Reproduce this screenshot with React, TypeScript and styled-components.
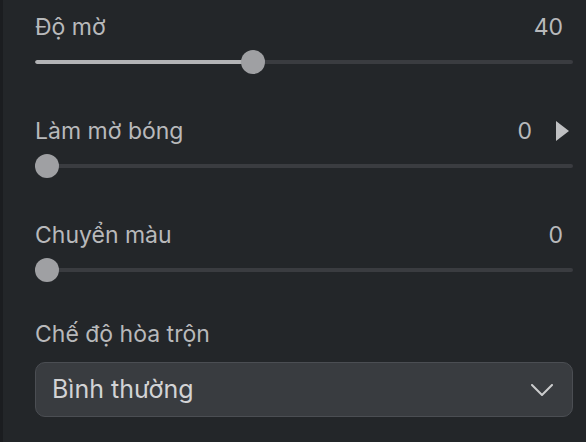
import React from "react";
import styled, { createGlobalStyle } from "styled-components";

const GlobalStyle = createGlobalStyle`
  html, body {
    margin: 0;
    padding: 0;
    background: #232629;
  }
  body {
    font-family: Inter, "Noto Sans", sans-serif;
  }
`;

interface SliderRowProps {
  label: string;
  value: number;
  max?: number;
  expandable?: boolean;
}

const SliderRow: React.FC<SliderRowProps> = ({
  label,
  value,
  max = 100,
  expandable,
}) => {
  const pct = Math.max(0, Math.min(1, value / max));

  return (
    <Section>
      <Header $withArrow={expandable}>
        <Label>{label}</Label>
        <Right>
          <Value>{value}</Value>
          {expandable && <Arrow />}
        </Right>
      </Header>
      <SliderBox>
        <Track>
          <Fill style={{ width: `calc(12px + ${pct} * (100% - 24px))` }} />
        </Track>
        <Thumb style={{ left: `calc(${pct} * (100% - 24px))` }} />
      </SliderBox>
    </Section>
  );
};

const App: React.FC = () => {
  return (
    <>
      <GlobalStyle />
      <Panel>
        <SliderRow label="Độ mờ" value={40} />
        <SliderRow label="Làm mờ bóng" value={0} expandable />
        <SliderRow label="Chuyển màu" value={0} />
        <BlendBlock>
          <Label>Chế độ hòa trộn</Label>
          <Select>
            <span>Bình thường</span>
            <Chevron viewBox="0 0 22 12" aria-hidden>
              <path
                d="M1 1 L11 11 L21 1"
                fill="none"
                stroke="currentColor"
                strokeWidth="2"
                strokeLinecap="round"
                strokeLinejoin="round"
              />
            </Chevron>
          </Select>
        </BlendBlock>
      </Panel>
    </>
  );
};

const Panel = styled.div`
  box-sizing: border-box;
  width: 586px;
  height: 442px;
  border-left: 3px solid #1b1d20;
  background: #232629;
  padding: 14px 13px 0 32px;
  display: flex;
  flex-direction: column;
  gap: 44px;
  overflow: hidden;
`;

const Section = styled.div`
  display: flex;
  flex-direction: column;
  gap: 10px;
`;

const Header = styled.div<{ $withArrow?: boolean }>`
  display: flex;
  justify-content: space-between;
  align-items: center;
  height: 26px;
  padding-right: ${(p) => (p.$withArrow ? "4px" : "10px")};
`;

const Label = styled.div`
  font-size: 23px;
  line-height: 26px;
  color: #b8b9bb;
`;

const Right = styled.div`
  display: flex;
  align-items: center;
  gap: 24px;
`;

const Value = styled.span`
  font-size: 23px;
  line-height: 26px;
  color: #b8b9bb;
`;

const Arrow = styled.span`
  width: 0;
  height: 0;
  border-top: 10px solid transparent;
  border-bottom: 10px solid transparent;
  border-left: 13px solid #bfc0c2;
`;

const SliderBox = styled.div`
  position: relative;
  height: 24px;
  display: flex;
  align-items: center;
`;

const Track = styled.div`
  position: relative;
  width: 100%;
  height: 4px;
  border-radius: 2px;
  background: #3a3c40;
  overflow: hidden;
`;

const Fill = styled.div`
  height: 100%;
  border-radius: 2px;
  background: #b3b4b6;
`;

const Thumb = styled.div`
  position: absolute;
  top: 0;
  width: 24px;
  height: 24px;
  border-radius: 50%;
  background: #9fa0a3;
`;

const BlendBlock = styled.div`
  display: flex;
  flex-direction: column;
  gap: 15px;
  margin-top: -5px;
`;

const Select = styled.div`
  box-sizing: border-box;
  height: 55px;
  display: flex;
  align-items: center;
  justify-content: space-between;
  padding: 0 19px 2px 16px;
  border: 1px solid #4b4e53;
  border-radius: 10px;
  background: #393c40;
  font-size: 25px;
  color: #d2d3d5;
`;

const Chevron = styled.svg`
  width: 22px;
  height: 12px;
  margin-top: 2px;
  color: #cbcccd;
`;

export default App;
